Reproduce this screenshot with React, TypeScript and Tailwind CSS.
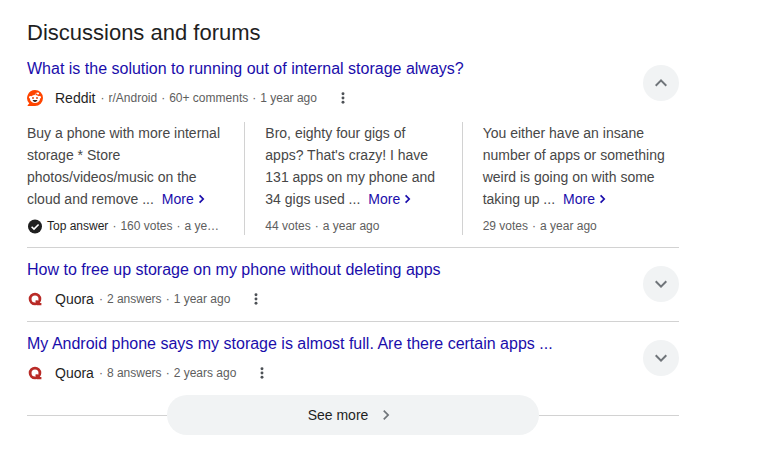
import { Fragment } from "react";
import clsx from "clsx";

type Answer = {
  lines: string[];
  meta: string[];
  top?: boolean;
};

type Thread = {
  title: string;
  source: "Reddit" | "Quora";
  details: string[];
  answers?: Answer[];
};

const threads: Thread[] = [
  {
    title: "What is the solution to running out of internal storage always?",
    source: "Reddit",
    details: ["r/Android", "60+ comments", "1 year ago"],
    answers: [
      {
        lines: [
          "Buy a phone with more internal",
          "storage * Store",
          "photos/videos/music on the",
          "cloud and remove ...",
        ],
        meta: ["160 votes", "a ye…"],
        top: true,
      },
      {
        lines: [
          "Bro, eighty four gigs of",
          "apps? That's crazy! I have",
          "131 apps on my phone and",
          "34 gigs used ...",
        ],
        meta: ["44 votes", "a year ago"],
      },
      {
        lines: [
          "You either have an insane",
          "number of apps or something",
          "weird is going on with some",
          "taking up ...",
        ],
        meta: ["29 votes", "a year ago"],
      },
    ],
  },
  {
    title: "How to free up storage on my phone without deleting apps",
    source: "Quora",
    details: ["2 answers", "1 year ago"],
  },
  {
    title: "My Android phone says my storage is almost full. Are there certain apps ...",
    source: "Quora",
    details: ["8 answers", "2 years ago"],
  },
];

function RedditIcon() {
  return (
    <svg className="size-4 shrink-0" viewBox="0 0 16 16" aria-hidden="true">
      <path d="M8 0a8 8 0 1 1 0 16H1.2c-.6 0-.8-.6-.4-1l1.5-1.5A8 8 0 0 1 8 0z" fill="#ff4500" />
      <path d="M8.2 5.2c.1-1.6 1-2.2 2.4-2.1" fill="none" stroke="#fff" strokeWidth="0.7" />
      <circle cx="11" cy="3.5" r="1.1" fill="#fff" />
      <circle cx="3.4" cy="7.3" r="1.4" fill="#fff" />
      <circle cx="12.6" cy="7.3" r="1.4" fill="#fff" />
      <ellipse cx="8" cy="9" rx="5" ry="4" fill="#fff" />
      <ellipse cx="6" cy="8" rx="0.9" ry="1.1" fill="#d63a00" />
      <ellipse cx="10" cy="8" rx="0.9" ry="1.1" fill="#d63a00" />
      <path d="M5.6 10.1h4.8c-.3 1.1-1.2 1.8-2.4 1.8s-2.1-.7-2.4-1.8z" fill="#3b2018" />
    </svg>
  );
}

function QuoraIcon() {
  return (
    <svg className="size-4 shrink-0" viewBox="0 0 16 16" aria-hidden="true">
      <circle cx="8" cy="8" r="4.9" fill="none" stroke="#b92b27" strokeWidth="2.8" />
      <path d="M8.2 9.8l2.2-.8 1.4 2.9h2.6v2.4H10z" fill="#b92b27" />
    </svg>
  );
}

function Chevron({ className }: { className: string }) {
  return (
    <svg className={className} viewBox="0 0 24 24" fill="currentColor" aria-hidden="true">
      <path d="M10 6 8.59 7.41 13.17 12l-4.58 4.59L10 18l6-6z" />
    </svg>
  );
}

function Details({ items }: { items: string[] }) {
  return items.map((item, i) => (
    <Fragment key={item}>
      {i > 0 && <span className="mx-1">·</span>}
      <span>{item}</span>
    </Fragment>
  ));
}

function AnswerCard({ answer, first }: { answer: Answer; first: boolean }) {
  const body = answer.lines.slice(0, -1);
  const last = answer.lines[answer.lines.length - 1];

  return (
    <div className={clsx("min-w-0", first ? "pr-4" : "border-l border-[#d2d2d2] pl-5")}>
      <div className="text-sm leading-[22px] whitespace-nowrap text-[#474747]">
        {body.map((line) => (
          <p key={line}>{line}</p>
        ))}
        <div className="flex">
          <p>{last}</p>
          <a href="#more" className="ml-2 flex items-center text-[#1a0dab]">
            More
            <svg className="ml-1 h-3 w-2" viewBox="0 0 8 12" fill="none" stroke="currentColor" strokeWidth="1.7" aria-hidden="true">
              <path d="M1.6 2.3 5.2 6 1.6 9.7" />
            </svg>
          </a>
        </div>
      </div>
      <div className="mt-1.5 flex h-[19px] items-center text-xs whitespace-nowrap text-[#5e5e5e]">
        {answer.top && (
          <>
            <svg className="mr-1 size-4 shrink-0" viewBox="0 0 16 16" aria-hidden="true">
              <circle cx="8" cy="8.5" r="7" fill="#1f1f1f" />
              <path d="m4.6 8.7 2.4 2.4 4.6-4.6" fill="none" stroke="#fff" strokeWidth="1.6" />
            </svg>
            <span className="text-[#1f1f1f]">Top answer</span>
            <span className="mx-1">·</span>
          </>
        )}
        <Details items={answer.meta} />
      </div>
    </div>
  );
}

function ThreadItem({ thread }: { thread: Thread }) {
  const open = Boolean(thread.answers);

  return (
    <article>
      <div className="flex items-start justify-between">
        <div className="min-w-0 pt-[9px] pb-3">
          <h3 className="truncate text-base leading-[26px]">
            <a href="#thread" className="text-[#1a0dab]">{thread.title}</a>
          </h3>
          <div className="mt-1.5 flex h-5 items-center text-xs text-[#5e5e5e]">
            {thread.source === "Reddit" ? <RedditIcon /> : <QuoraIcon />}
            <span className="ml-3 text-sm text-[#1f1f1f]">{thread.source}</span>
            <span className="mr-1 ml-[5px]">·</span>
            <Details items={thread.details} />
            <button type="button" aria-label="About this result" className="ml-[18px] text-[#4d5156]">
              <svg className="size-4" viewBox="0 0 24 24" fill="currentColor" aria-hidden="true">
                <circle cx="12" cy="5.5" r="2.2" />
                <circle cx="12" cy="12" r="2.2" />
                <circle cx="12" cy="18.5" r="2.2" />
              </svg>
            </button>
          </div>
        </div>
        <button
          type="button"
          aria-expanded={open}
          aria-label={open ? "Collapse" : "Expand"}
          className="mt-[18px] flex size-9 shrink-0 items-center justify-center rounded-full bg-[#f1f3f4] text-[#70757a]"
        >
          <Chevron className={clsx("size-6", open ? "-rotate-90" : "rotate-90")} />
        </button>
      </div>
      {thread.answers && (
        <div className="mt-0.5 mb-3 grid grid-cols-3">
          {thread.answers.map((answer, i) => (
            <AnswerCard key={answer.lines[0]} answer={answer} first={i === 0} />
          ))}
        </div>
      )}
    </article>
  );
}

export default function App() {
  return (
    <main className="min-h-screen bg-white px-[27px] pt-[19px] font-['Liberation_Sans',Arial,sans-serif]">
      <section className="max-w-[652px]">
        <h2 className="text-[22px] leading-7 text-[#1f1f1f]">Discussions and forums</h2>
        <div className="divide-y divide-[#d2d2d2]">
          {threads.map((thread) => (
            <ThreadItem key={thread.title} thread={thread} />
          ))}
        </div>
        <div className="flex items-center">
          <div className="h-px flex-1 bg-[#d2d2d2]" />
          <button
            type="button"
            className="flex h-10 w-[372px] items-center justify-center gap-1.5 rounded-full bg-[#f1f3f4] text-sm text-[#1f1f1f]"
          >
            See more
            <Chevron className="size-6 p-0.5 text-[#70757a]" />
          </button>
          <div className="h-px flex-1 bg-[#d2d2d2]" />
        </div>
      </section>
    </main>
  );
}
